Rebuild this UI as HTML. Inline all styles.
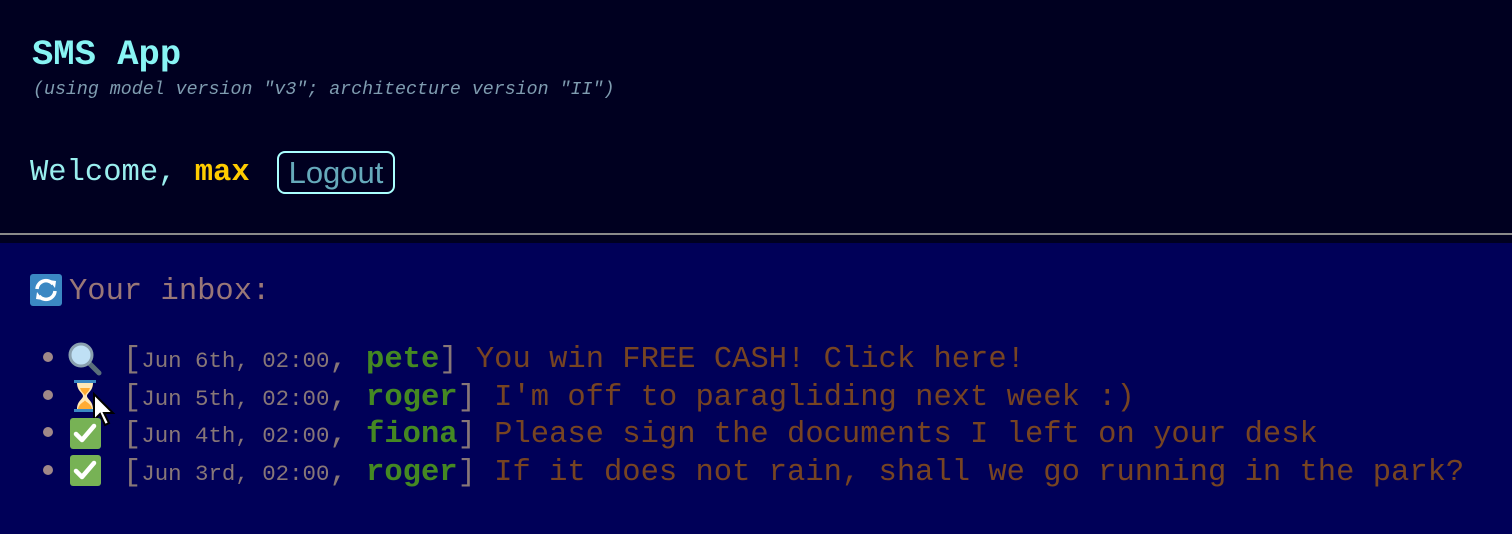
<!DOCTYPE html>
<html><head><style>
body{margin:0;width:1512px;height:534px;overflow:hidden;background:#000058;font-family:"Liberation Mono",monospace;}
#hdr{position:absolute;left:0;top:0;width:1512px;height:243px;background:#000020;}
#line{position:absolute;left:0;top:233px;width:1512px;height:2px;background:#8a8a8a;}
.t{position:absolute;white-space:nowrap;}
.row{position:absolute;left:123px;white-space:nowrap;font-size:30.5px;line-height:38px;height:38px;color:#887777;}
.d{font-size:22.4px}
.n{color:#448822;font-weight:bold}
.m{color:#774422}
.b{position:absolute;left:43px;width:10px;height:10px;border-radius:50%;background:#a08888;}
</style></head><body>
<div id="hdr"></div><div id="line"></div>
<div class="t" style="left:32px;top:34px;font-size:35.5px;font-weight:bold;color:#88f4f4;">SMS App</div>
<div class="t" style="left:33px;top:80px;font-size:18.3px;font-style:italic;color:#7f9cb0;">(using model version "v3"; architecture version "II")</div>
<div class="t" style="left:30px;top:156px;font-size:30.5px;color:#99eeee;">Welcome, <b style="color:#ffcc00">max</b></div>
<div class="t" style="left:277px;top:151px;width:114px;height:39px;border:2px solid #aaffff;border-radius:8px;font-family:'Liberation Sans',sans-serif;font-size:31px;color:#66aabb;text-align:center;line-height:39px;">Logout</div>

<svg class="t" style="left:30px;top:274px" width="32" height="32" viewBox="0 0 32 32"><rect width="32" height="32" rx="3" fill="#3b88c3"/><path d="M7 15a9 9 0 0 1 16-5" stroke="#fff" stroke-width="3.5" fill="none"/><path d="M19 6l7 1-1 7z" fill="#fff"/><path d="M25 17a9 9 0 0 1-16 5" stroke="#fff" stroke-width="3.5" fill="none"/><path d="M13 26l-7-1 1-7z" fill="#fff"/></svg>
<div class="t" style="left:69px;top:275px;font-size:30.5px;color:#997777;">Your inbox:</div>

<div class="b" style="top:352px"></div>
<div class="b" style="top:390px"></div>
<div class="b" style="top:427px"></div>
<div class="b" style="top:465px"></div>

<svg class="t" style="left:68px;top:342px" width="34" height="34" viewBox="0 0 34 34"><line x1="20" y1="20" x2="31" y2="31" stroke="#5a6e7a" stroke-width="5" stroke-linecap="round"/><circle cx="13" cy="13" r="11" fill="#bfe0f5" stroke="#8aa0ae" stroke-width="3"/></svg>
<svg class="t" style="left:74px;top:380px" width="22" height="32" viewBox="0 0 22 32"><rect x="0" y="0" width="22" height="3" fill="#3b88c3"/><rect x="0" y="29" width="22" height="3" fill="#3b88c3"/><path d="M3 3h16c0 8-6 10-6 13 0 3 6 5 6 13H3c0-8 6-10 6-13 0-3-6-5-6-13z" fill="#ffe8b6"/><path d="M6 8h10c-1 4-5 6-5 8 0-2-4-4-5-8zM4 29c1-6 7-7 7-9 0 2 6 3 7 9z" fill="#ffac33"/></svg>
<svg class="t" style="left:92px;top:392px" width="24" height="36" viewBox="0 0 24 36"><path d="M2 2v26l6-6 5 11 4-2-5-10h9z" fill="#fff" stroke="#000" stroke-width="2"/></svg>
<svg class="t" style="left:70px;top:418px" width="31" height="31" viewBox="0 0 31 31"><rect width="31" height="31" rx="3" fill="#77b255"/><path d="M6 16l6 6 12-14" stroke="#fff" stroke-width="4.5" fill="none" stroke-linecap="round" stroke-linejoin="round"/></svg>
<svg class="t" style="left:70px;top:455px" width="31" height="31" viewBox="0 0 31 31"><rect width="31" height="31" rx="3" fill="#77b255"/><path d="M6 16l6 6 12-14" stroke="#fff" stroke-width="4.5" fill="none" stroke-linecap="round" stroke-linejoin="round"/></svg>

<div class="row" style="top:341px">[<span class="d">Jun 6th, 02:00</span>, <span class="n">pete</span>] <span class="m">You win FREE CASH! Click here!</span></div>
<div class="row" style="top:379px">[<span class="d">Jun 5th, 02:00</span>, <span class="n">roger</span>] <span class="m">I'm off to paragliding next week :)</span></div>
<div class="row" style="top:416px">[<span class="d">Jun 4th, 02:00</span>, <span class="n">fiona</span>] <span class="m">Please sign the documents I left on your desk</span></div>
<div class="row" style="top:454px">[<span class="d">Jun 3rd, 02:00</span>, <span class="n">roger</span>] <span class="m">If it does not rain, shall we go running in the park?</span></div>
</body></html>
